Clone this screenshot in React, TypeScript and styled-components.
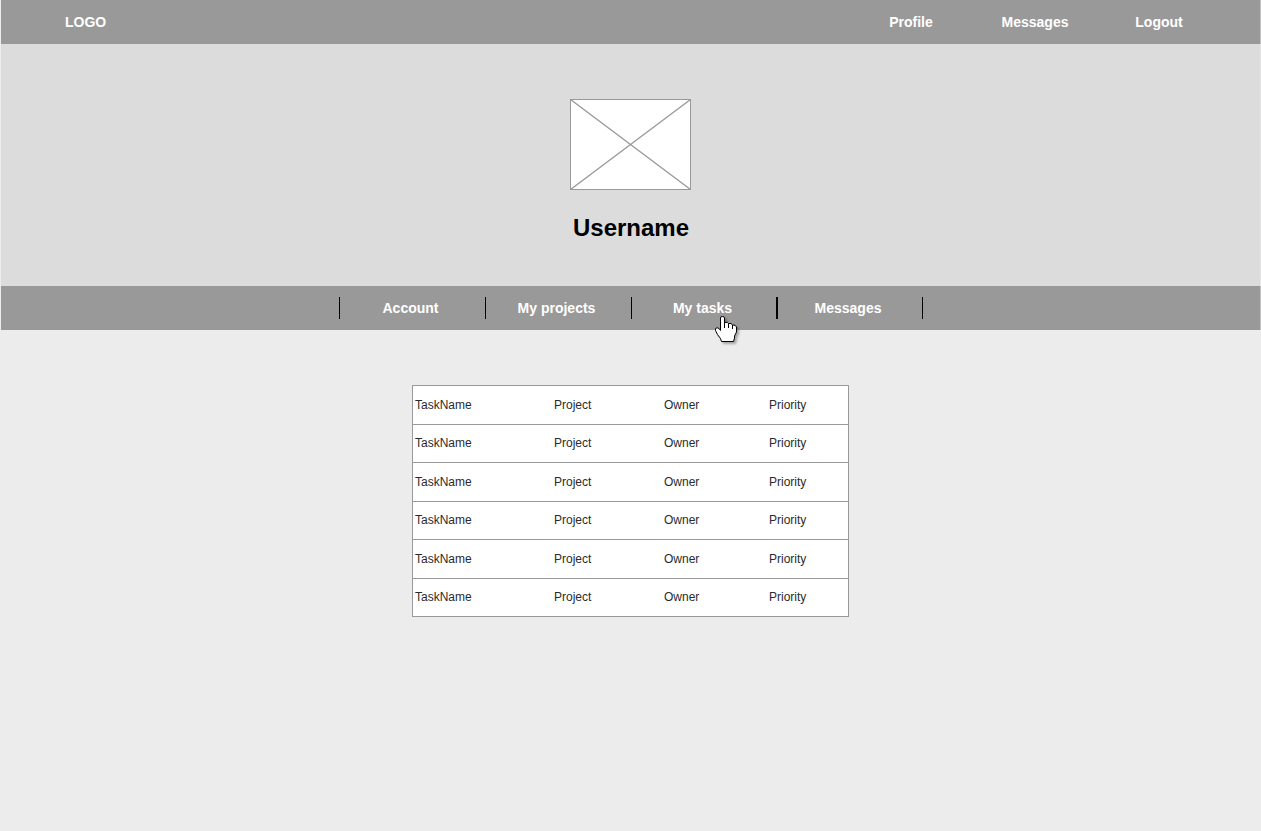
import React from "react";
import styled, { createGlobalStyle } from "styled-components";

const GlobalStyle = createGlobalStyle`
  *, *::before, *::after { box-sizing: border-box; }
  body {
    margin: 0;
    background: #ececec;
    font-family: "Liberation Sans", Arial, sans-serif;
  }
`;

const Page = styled.div`
  min-height: 100vh;
  padding-left: 1px;
  background: #ececec;
`;

const TopBar = styled.header`
  display: flex;
  align-items: center;
  justify-content: space-between;
  height: 44px;
  padding: 0 39px 0 64px;
  background: #999999;
  border-right: 1px solid #c2c2c2;
`;

const BarLink = styled.a`
  color: #ffffff;
  font-size: 14px;
  line-height: 20px;
  font-weight: 700;
  text-decoration: none;
`;

const UserNav = styled.nav`
  display: grid;
  grid-template-columns: repeat(3, 124px);
  justify-items: center;
`;

const Hero = styled.section`
  display: flex;
  flex-direction: column;
  align-items: center;
  gap: 24px;
  height: 242px;
  padding-top: 55px;
  background: #dcdcdc;
  border-right: 1px solid #e4e4e4;
`;

const Username = styled.h1`
  margin: 0;
  padding-left: 1px;
  color: #000000;
  font-size: 24px;
  line-height: 28px;
  font-weight: 700;
`;

const SectionBar = styled.nav`
  display: flex;
  align-items: center;
  justify-content: center;
  height: 44px;
  padding-left: 1px;
  background: #999999;
  border-right: 1px solid #c2c2c2;
`;

const Sections = styled.ul`
  display: flex;
  margin: 0;
  padding: 0;
  list-style: none;
`;

const Section = styled.li<{ $heavy?: boolean }>`
  position: relative;
  display: flex;
  align-items: center;
  justify-content: center;
  width: ${(p) => (p.$heavy ? 147 : 146)}px;
  height: 22px;
  margin-left: ${(p) => (p.$heavy ? -1 : 0)}px;
  padding-right: 4px;
  border-left: ${(p) => (p.$heavy ? 2 : 1)}px solid #000000;

  &:last-child {
    border-right: 1px solid #000000;
  }
`;

const Pointer = styled.svg`
  position: absolute;
  left: 83px;
  top: 19px;
  overflow: visible;
  pointer-events: none;
  filter: drop-shadow(2px 2px 1px rgba(0, 0, 0, 0.3));
`;

const Content = styled.main`
  display: flex;
  justify-content: center;
  padding: 55px 1px 55px 0;
`;

const TaskTable = styled.table`
  width: 437px;
  table-layout: fixed;
  border-collapse: separate;
  border-spacing: 0;
  border: 1px solid #999999;
  border-bottom: 0;
  background: #ffffff;
`;

const Column = styled.col<{ $width?: number }>`
  width: ${(p) => (p.$width ? `${p.$width}px` : "auto")};
`;

const Cell = styled.td`
  padding: 0 2px;
  border-bottom: 1px solid #999999;
  color: #2b2b2b;
  font-size: 12px;
  line-height: 16px;
  vertical-align: middle;
`;

const TaskRow = styled.tr`
  height: 38px;

  &:nth-child(odd) {
    height: 39px;
  }

  &:nth-child(even) ${Cell} {
    padding-bottom: 2px;
  }
`;

const sections = ["Account", "My projects", "My tasks", "Messages"];

const tasks = Array.from({ length: 6 }, () => ({
  name: "TaskName",
  project: "Project",
  owner: "Owner",
  priority: "Priority",
}));

function Portrait() {
  return (
    <svg width="121" height="91" viewBox="0 0 121 91" role="img" aria-label="User picture">
      <rect x="0.5" y="0.5" width="120" height="90" fill="#ffffff" stroke="#999999" />
      <path d="M0.5 0.5 L120.5 90.5 M120.5 0.5 L0.5 90.5" stroke="#999999" strokeWidth="1.3" fill="none" />
    </svg>
  );
}

function HandPointer() {
  return (
    <Pointer width="22" height="26" viewBox="0 0 22 26" aria-hidden="true">
      <path
        d="M5.5 14.5 V2 Q5.5 0.5 7 0.5 H7.5 Q9.5 0.5 9.5 2 V6.5 Q13 5.8 13.5 7.5 Q16.5 6.8 17.5 9 Q20.5 8.5 21.5 11 V16 L19.5 20 V22 L18.5 25.5 H6.5 L5.5 22.5 L2.5 18.5 L0.5 14.5 V12.5 Q2 11 4 12.5 Z"
        fill="#ffffff"
        stroke="#000000"
      />
      <path d="M9.5 6 V12 M13.5 7.5 V12 M17.5 9 V13" stroke="#000000" fill="none" />
    </Pointer>
  );
}

export default function App() {
  return (
    <>
      <GlobalStyle />
      <Page>
        <TopBar>
          <BarLink href="#home">LOGO</BarLink>
          <UserNav aria-label="User">
            <BarLink href="#profile">Profile</BarLink>
            <BarLink href="#inbox">Messages</BarLink>
            <BarLink href="#logout">Logout</BarLink>
          </UserNav>
        </TopBar>
        <Hero>
          <Portrait />
          <Username>Username</Username>
        </Hero>
        <SectionBar aria-label="Sections">
          <Sections>
            {sections.map((label) => (
              <Section key={label} $heavy={label === "Messages"}>
                <BarLink href={"#" + label.toLowerCase().replace(" ", "-")}>{label}</BarLink>
                {label === "My tasks" && <HandPointer />}
              </Section>
            ))}
          </Sections>
        </SectionBar>
        <Content>
          <TaskTable aria-label="My tasks">
            <colgroup>
              <Column $width={139} />
              <Column $width={110} />
              <Column $width={105} />
              <Column />
            </colgroup>
            <tbody>
              {tasks.map((task, i) => (
                <TaskRow key={i}>
                  <Cell>{task.name}</Cell>
                  <Cell>{task.project}</Cell>
                  <Cell>{task.owner}</Cell>
                  <Cell>{task.priority}</Cell>
                </TaskRow>
              ))}
            </tbody>
          </TaskTable>
        </Content>
      </Page>
    </>
  );
}
